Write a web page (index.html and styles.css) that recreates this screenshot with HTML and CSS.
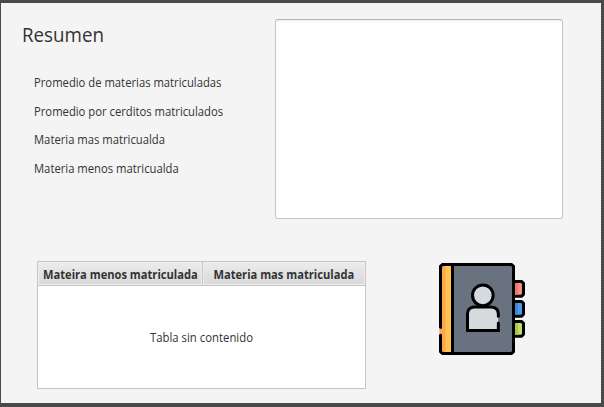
FILE: index.html
```
<!DOCTYPE html>
<html lang="es">
<head>
<meta charset="utf-8">
<title>Resumen</title>
<link rel="stylesheet" href="styles.css">
</head>
<body>
<main class="window">
  <section class="top">
    <div class="summary">
      <h1 class="title"><span>Resumen</span></h1>
      <ul class="labels">
        <li><span>Promedio de materias matriculadas</span></li>
        <li><span>Promedio por cerditos matriculados</span></li>
        <li><span>Materia mas matricualda</span></li>
        <li><span>Materia menos matricualda</span></li>
      </ul>
    </div>
    <div class="textarea"></div>
  </section>
  <section class="bottom">
    <div class="table">
      <div class="head">
        <div class="col first"><span>Mateira menos matriculada</span></div>
        <div class="col"><span>Materia mas matriculada</span></div>
      </div>
      <div class="empty"><span>Tabla sin contenido</span></div>
    </div>
    <svg class="icon" viewBox="0 0 312 324" width="104" height="108">
      <g stroke="#000" stroke-width="9" stroke-linejoin="round" stroke-linecap="round">
        <path fill="#ff8b80" d="M250 79.500H275L280.500 85V118L275 123.500H250Z"/>
        <path fill="#4b9bea" d="M250 139.500H275L280.500 145V178L275 184H250Z"/>
        <path fill="#c3dc68" d="M250 199.500H275L280.500 205V238L275 244H250Z"/>
      </g>
      <path fill="#e8776f" d="M255 84h9v35h-9z"/>
      <path fill="#3f87d3" d="M255 144h9v35h-9z"/>
      <path fill="#a9c456" d="M255 204h9v35h-9z"/>
      <rect x="31.500" y="28.500" width="219" height="267" rx="6" fill="#69737f"/>
      <path fill="#ffc44f" d="M36 33h28v258H36z"/>
      <path fill="#ffa64d" d="M36 33h10v258H36zM28 221h9v16h-9z"/>
      <g fill="none" stroke="#000" stroke-width="9" stroke-linecap="round" stroke-linejoin="round">
        <path d="M31.500 217V34L37 28.500H245L250.500 34V290L245 295.500H37L31.500 290V241"/>
        <path d="M67.500 30V294"/>
        <circle cx="158.500" cy="121" r="31" fill="#d5dade"/>
        <path fill="#d5dade" stroke="none" d="M112 226V175Q112 157 132 156H186Q205 158 205 176V226Z"/>
        <path stroke-linejoin="miter" d="M205 184V176Q204 157 184 156H132Q113 158 112.500 176V226.500H205V204"/>
      </g>
    </svg>
  </section>
</main>
</body>
</html>
```
FILE: styles.css
```
* { box-sizing: border-box; }
body {
  margin: 0;
  width: 604px;
  height: 407px;
  padding: 3px 3px 4px 1px;
  overflow: hidden;
  background: repeating-conic-gradient(#444 0 25%, #505050 0 50%) 0 0 / 2px 2px;
  font: 12px/16px "Open Sans", "Noto Sans", sans-serif;
  color: #333;
}
.window {
  height: 400px;
  padding: 16px 38px 14px 21px;
  background: #f4f4f4;
  display: flex;
  flex-direction: column;
  justify-content: space-between;
}
.top { display: flex; justify-content: space-between; height: 200px; }
.title { margin: 2px 0 0; font-size: 20px; line-height: 27px; font-weight: 400; }
.title span, .labels span { display: inline-block; transform: scaleX(.938); transform-origin: left; }
.labels {
  margin: 27px 0 0;
  padding: 0 0 0 12px;
  list-style: none;
  display: grid;
  grid-auto-rows: 28.7px;
}
.labels li, .title, .col, .empty { white-space: nowrap; }
.textarea {
  width: 288px;
  height: 200px;
  border: 1px solid #c6c6c6;
  border-top-color: #b5b5b5;
  border-radius: 3px;
  background: linear-gradient(#f0f0f0, #fff 4px);
}
.bottom { display: flex; gap: 64px; align-items: flex-start; height: 128px; padding-left: 15px; }
.table {
  width: 329px;
  height: 128px;
  border: 1px solid #c5c5c5;
  background: #fff;
  display: flex;
  flex-direction: column;
}
.head { display: flex; height: 24px; border-bottom: 1px solid #c5c5c5; }
.col {
  flex: 1;
  min-width: 0;
  display: flex;
  justify-content: center;
  align-items: center;
  padding-top: 3px;
  font-weight: 700;
  background: linear-gradient(#ececec, #d9d9d9);
  box-shadow: inset 0 0 0 1px #eee;
}
.col span { transform: scaleX(.928); }
.first { flex: 0 0 165px; border-right: 1px solid #c5c5c5; }
.empty { flex: 1; padding-top: 2px; display: flex; justify-content: center; align-items: center; }
.empty span { transform: scaleX(.945); }
.icon { margin-top: -6px; flex: none; }
```
